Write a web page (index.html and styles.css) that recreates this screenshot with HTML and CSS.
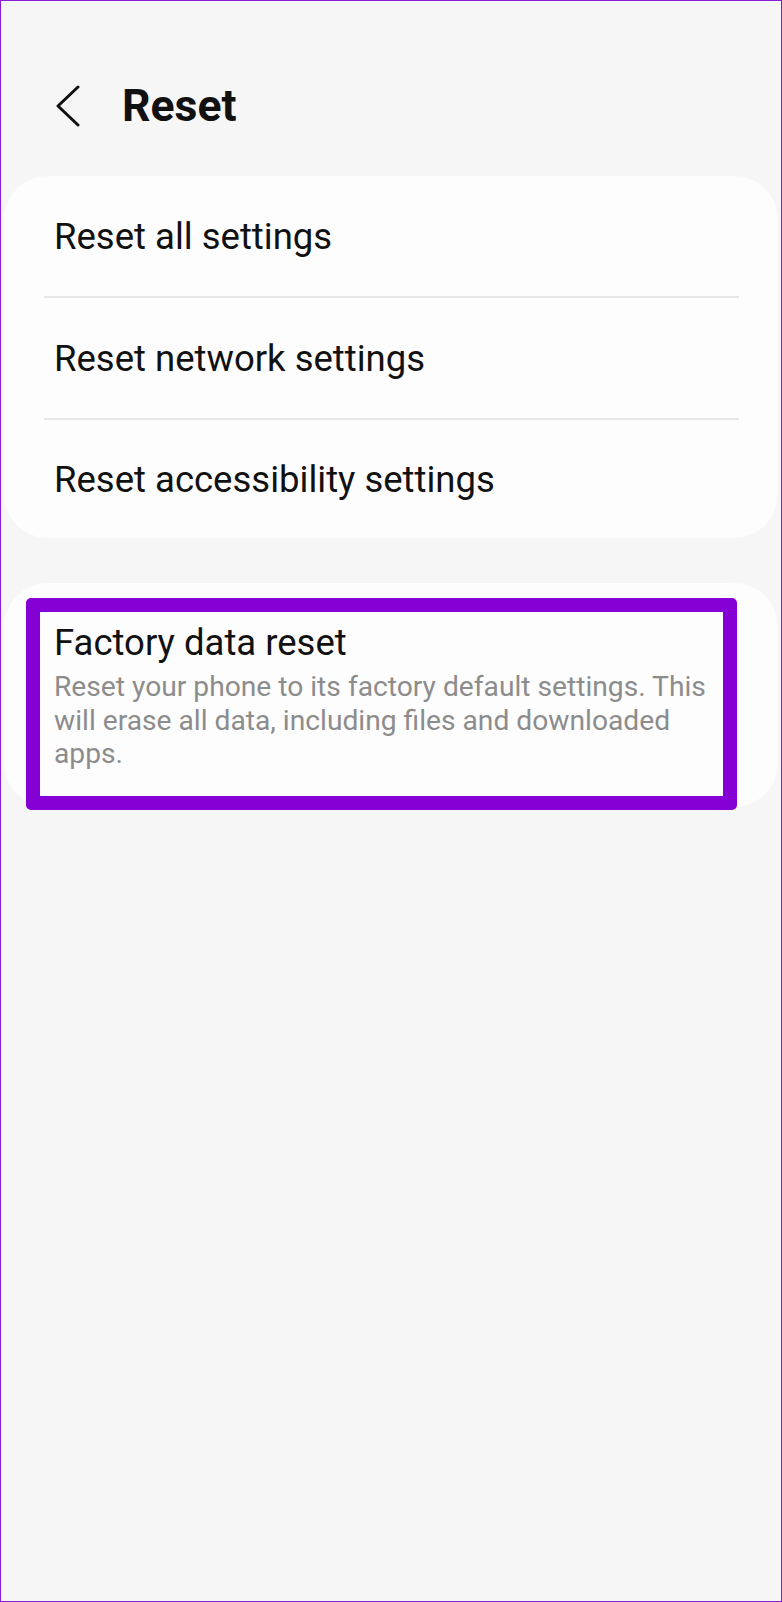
FILE: index.html
```html
<!DOCTYPE html>
<html lang="en">
<head>
    <meta charset="UTF-8">
    <meta name="viewport" content="width=device-width, initial-scale=1.0">
    <title>Reset</title>
    <link rel="stylesheet" href="styles.css">
</head>
<body>
    <div class="screen">
        <div class="header">
            <svg class="back" width="26" height="42" viewBox="0 0 26 42">
                <polyline points="23,2 3,21 23,40" fill="none" stroke="#111" stroke-width="3" stroke-linecap="round" stroke-linejoin="round"/>
            </svg>
            <h1>Reset</h1>
        </div>

        <div class="card">
            <div class="row">Reset all settings</div>
            <div class="divider"></div>
            <div class="row">Reset network settings</div>
            <div class="divider"></div>
            <div class="row last">Reset accessibility settings</div>
        </div>

        <div class="card factory">
            <div class="factory-title">Factory data reset</div>
            <div class="factory-desc">Reset your phone to its factory default settings. This will erase all data, including files and downloaded apps.</div>
            <div class="highlight"></div>
        </div>
    </div>
</body>
</html>
```

FILE: styles.css
```css
body {
    margin: 0;
    padding: 0;
    background-color: #f6f6f6;
    font-family: Roboto, "Noto Sans", sans-serif;
    color: #111;
}

.screen {
    height: 1602px;
    box-sizing: border-box;
    border: 1px solid #8a1ed6;
    overflow: hidden;
}

.header {
    display: flex;
    align-items: center;
    height: 50px;
    padding: 80px 0 0 54px;
    margin-bottom: 45px;
}

.header h1 {
    margin: 0 0 0 41px;
    font-size: 44.5px;
    font-weight: 700;
}

.card {
    margin: 0 3px;
    background-color: #fdfdfd;
    border-radius: 44px;
}

.row {
    display: flex;
    align-items: center;
    height: 120px;
    padding: 0 50px;
    font-size: 36.5px;
}

.row.last {
    height: 118px;
}

.divider {
    height: 2px;
    margin: 0 39px 0 40px;
    background-color: #e7e7e7;
}

.factory {
    position: relative;
    margin-top: 45px;
    padding: 38px 58px 36px 50px;
}

.factory-title {
    font-size: 36.5px;
    line-height: 44px;
}

.factory-desc {
    margin-top: 5px;
    font-size: 28.2px;
    line-height: 33.5px;
    color: #8c8c8c;
}

/* annotation box drawn over the item */
.highlight {
    position: absolute;
    left: 22px;
    top: 15px;
    width: 711px;
    height: 212px;
    box-sizing: border-box;
    border: 14px solid #8500d5;
    border-radius: 5px;
}
```
